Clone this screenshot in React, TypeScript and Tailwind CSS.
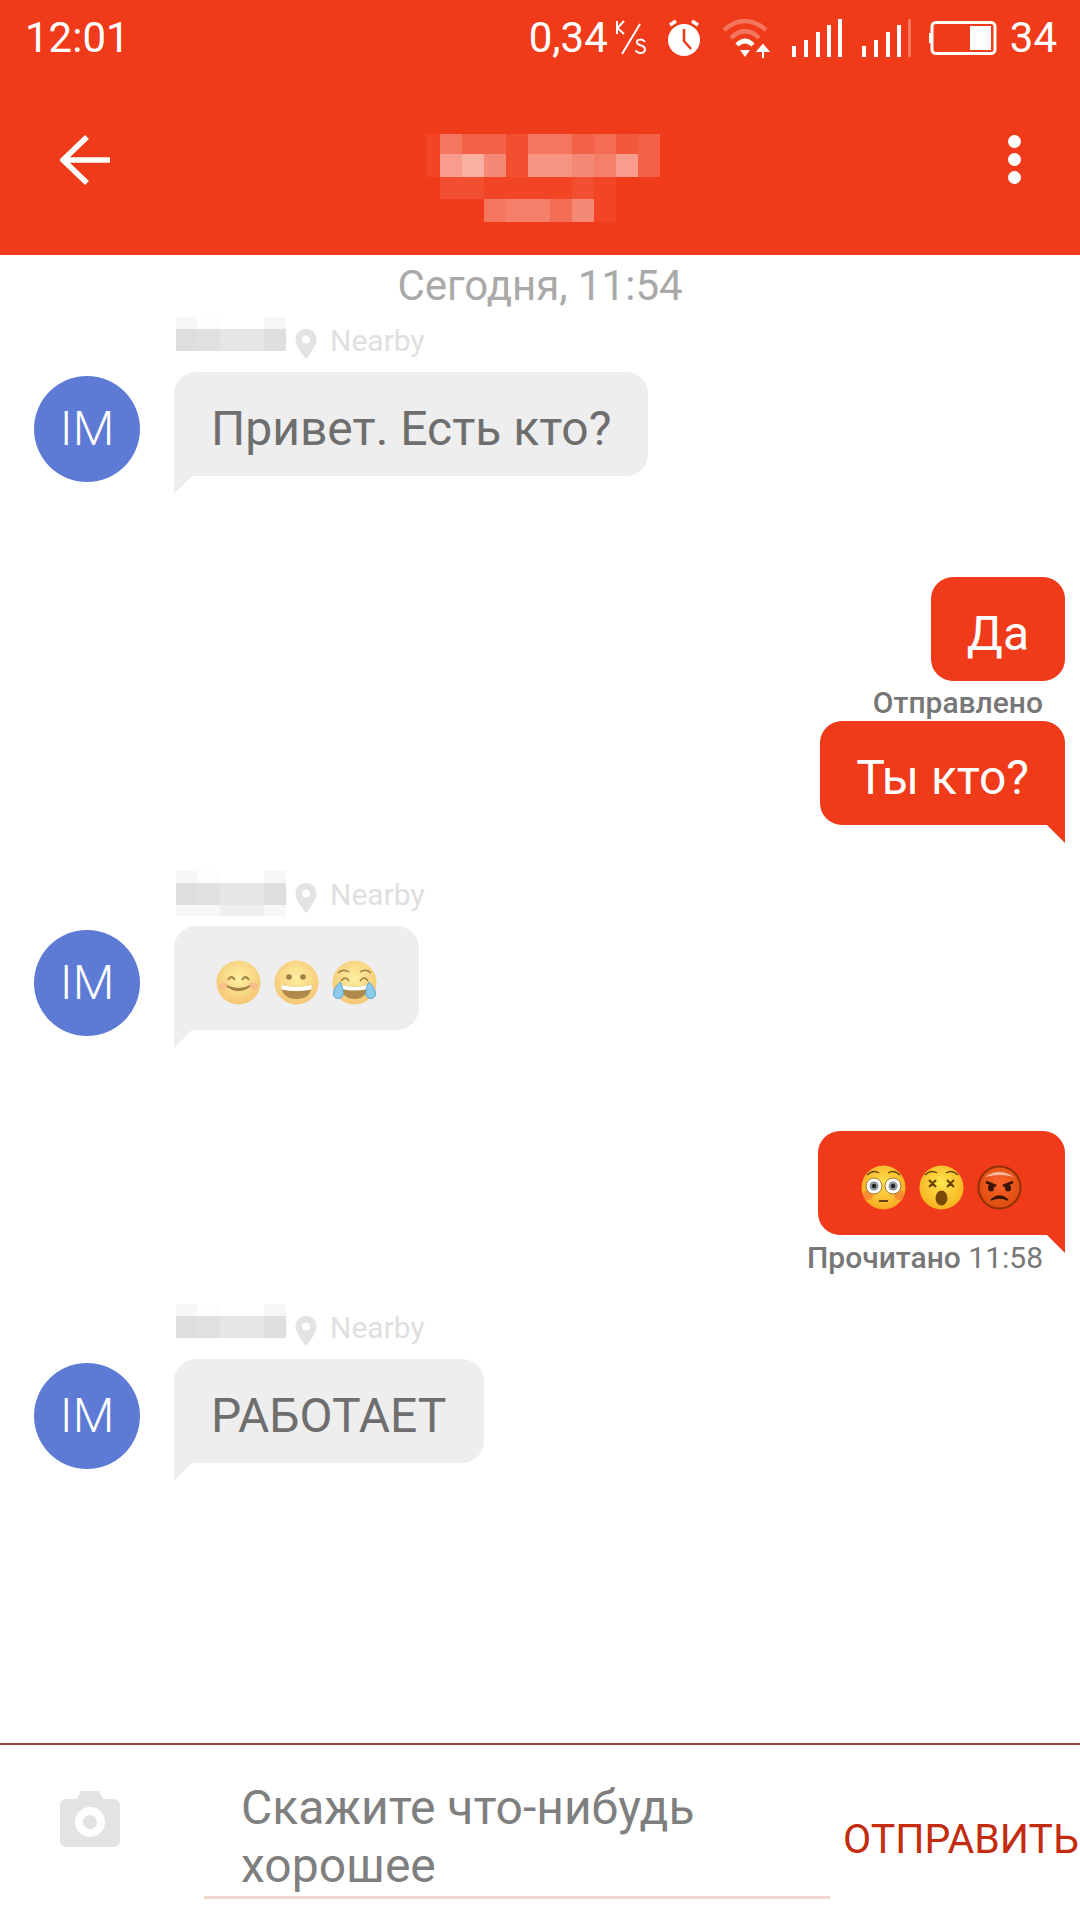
const pixelRows = [
    ['bg-white/5', 'bg-white/30', 'bg-white/20', 'bg-white/20', 'bg-white/10', 'bg-white/30', 'bg-white/30', 'bg-white/20', 'bg-white/25', 'bg-white/15', 'bg-white/20'],
    ['bg-white/5', 'bg-white/50', 'bg-white/60', 'bg-white/40', 'bg-white/10', 'bg-white/45', 'bg-white/45', 'bg-white/40', 'bg-white/35', 'bg-white/50', 'bg-white/20'],
    ['', 'bg-white/10', 'bg-white/10', 'bg-white/5', 'bg-white/5', 'bg-white/5', 'bg-white/5', 'bg-white/10', 'bg-white/5', '', ''],
    ['', '', '', 'bg-white/30', 'bg-white/35', 'bg-white/35', 'bg-white/25', 'bg-white/40', 'bg-white/5', '', ''],
];

const nameRows = [
    ['bg-[#f7f7f7]', 'bg-[#fdfdfd]', 'bg-white', 'bg-[#f6f6f6]'],
    ['bg-[#dedede]', 'bg-[#e0e0e0]', 'bg-[#e6e6e6]', 'bg-[#dfdfdf]'],
];
const nameLastRow = ['bg-[#f7f7f7]', 'bg-[#f8f8f8]', 'bg-[#efefef]', 'bg-[#f8f8f8]'];

const font = "font-['Roboto',sans-serif]";

const Avatar: React.FunctionComponent = () => (
    <div className="w-[106px] h-[106px] rounded-full bg-[#5d7bd5] flex items-center justify-center text-white text-[48px] font-light shrink-0 mt-[59px]">IM</div>
);

const NameLabel: React.FunctionComponent<{tall?: boolean}> = ({tall}) => (
    <div className="h-[55px] flex items-start pl-[2px]">
        <div className="grid grid-cols-[21px_23px_44px_22px] grid-rows-[12px_22px_11px] w-[110px]">
            {(tall ? [...nameRows, nameLastRow] : nameRows).flat().map((cell, index) => (
                <div key={index} className={cell}></div>
            ))}
        </div>
        <svg width="22" height="30" viewBox="0 0 22 30" className="ml-[9px] mt-[12px]">
            <path fillRule="evenodd" fill="#e3e3e3" d="M11 0C5 0 .5 4.600.5 10.500.5 17 7 25 11 30c4-5 10.500-13 10.500-19.500C21.500 4.600 17 0 11 0zm0 14.500a4 4 0 1 1 0-8 4 4 0 0 1 0 8z" />
        </svg>
        <span className="ml-[13px] text-[30px] leading-[40px] text-[#dfdfdf] mt-[4px]">Nearby</span>
    </div>
);

const TailLeft: React.FunctionComponent = () => (
    <svg width="18" height="18" viewBox="0 0 18 18" className="absolute left-0 top-full">
        <path d="M0 0H18L0 18Z" fill="#eeeeee" />
    </svg>
);

const TailRight: React.FunctionComponent = () => (
    <svg width="18" height="18" viewBox="0 0 18 18" className="absolute right-0 top-full">
        <path d="M0 0H18V18Z" fill="#f03b1a" />
    </svg>
);

const Incoming: React.FunctionComponent<{className?: string, tall?: boolean, children: React.ReactNode}> = ({className, tall, children}) => (
    <div className={`flex pl-[34px] ${className ?? ''}`}>
        <Avatar />
        <div className="ml-[34px]">
            <NameLabel tall={tall} />
            <div className="relative h-[104px] px-[37px] pt-[9px] flex items-center w-fit bg-[#eeeeee] rounded-[22px] rounded-bl-none text-[48px] text-[#6e6e6e]">
                {children}
                <TailLeft />
            </div>
        </div>
    </div>
);

const Outgoing: React.FunctionComponent<{tail?: boolean, children: React.ReactNode}> = ({tail, children}) => (
    <div className={`relative self-end h-[104px] px-[36px] pt-[9px] flex items-center bg-[#f03b1a] text-white text-[48px] rounded-[22px] ${tail ? 'rounded-br-none' : ''}`}>
        {children}
        {tail && <TailRight />}
    </div>
);

const Face: React.FunctionComponent<{id: string, from: string, to: string, children: React.ReactNode}> = ({id, from, to, children}) => (
    <svg width="45" height="45" viewBox="0 0 45 45" className="shrink-0">
        <defs>
            <radialGradient id={id} cx="50%" cy="40%" r="60%">
                <stop offset="0%" stopColor={from} />
                <stop offset="100%" stopColor={to} />
            </radialGradient>
        </defs>
        <circle cx="22.500" cy="22.500" r="22" fill={`url(#${id})`} />
        {children}
    </svg>
);

const Smile = () => (
    <Face id="smile" from="#fdf0a0" to="#f5c673">
        <ellipse cx="8" cy="26" rx="5" ry="3.500" fill="#f9b48a" opacity="0.7" />
        <ellipse cx="37" cy="26" rx="5" ry="3.500" fill="#f9b48a" opacity="0.7" />
        <path d="M12 20q3.500-6 7 0M26 20q3.500-6 7 0" fill="none" stroke="#a07f45" strokeWidth="1.800" />
        <path d="M11 26q11.500 9 23 0q-11.500 5-23 0z" fill="#a07f45" stroke="#a07f45" strokeWidth="1.200" />
    </Face>
);

const Grin = () => (
    <Face id="grin" from="#fdf0a0" to="#f5c673">
        <circle cx="15" cy="17" r="2.800" fill="#a07f45" />
        <circle cx="29" cy="17" r="2.800" fill="#a07f45" />
        <path d="M7 25q15.500 3.500 31 0q-1 14-15.500 14T7 25z" fill="#b08a4c" />
        <path d="M7 25q15.500 3.500 31 0l-.7 4.500q-15 3-29.600 0z" fill="#ffffff" />
    </Face>
);

const Joy = () => (
    <Face id="joy" from="#fdf0a0" to="#f5c673">
        <path d="M6 13q5-5 11-1M28 12q6-4 11 1M9 21q4.500-6 8 0M28 21q4.500-6 8 0" fill="none" stroke="#a07f45" strokeWidth="1.500" />
        <path d="M9 25q13.500 3.500 27 0q-1 14-13.500 14T9 25z" fill="#b08a4c" />
        <path d="M9 25q13.500 3.500 27 0l-.7 4q-13 3-25.600 0z" fill="#ffffff" />
        <path d="M8 22c-3 4-8 8-6 14 2 4 8 3 9-1 1-4-1-9-3-13z" fill="#8ccbec" stroke="#5aa3cf" strokeWidth="1" />
        <path d="M37 22c3 4 8 8 6 14-2 4-8 3-9-1-1-4 1-9 3-13z" fill="#8ccbec" stroke="#5aa3cf" strokeWidth="1" />
    </Face>
);

const Flushed = () => (
    <Face id="flushed" from="#ffe14d" to="#f8a921">
        <ellipse cx="7" cy="30" rx="5" ry="5" fill="#f5733a" opacity="0.6" />
        <ellipse cx="38" cy="30" rx="5" ry="5" fill="#f5733a" opacity="0.6" />
        <path d="M6 10q6-6 12-2M27 8q6-4 12 2" fill="none" stroke="#6b4300" strokeWidth="1.500" />
        <circle cx="13" cy="21" r="8" fill="#ffffff" stroke="#a87a20" strokeWidth="1" />
        <circle cx="32" cy="21" r="8" fill="#ffffff" stroke="#a87a20" strokeWidth="1" />
        <circle cx="13" cy="21" r="4.500" fill="#8a9698" />
        <circle cx="32" cy="21" r="4.500" fill="#8a9698" />
        <circle cx="13" cy="21" r="2.200" fill="#222222" />
        <circle cx="32" cy="21" r="2.200" fill="#222222" />
        <path d="M18 36h9" stroke="#6b4300" strokeWidth="2" />
    </Face>
);

const Dizzy = () => (
    <Face id="dizzy" from="#ffe54f" to="#f6b21e">
        <path d="M6 10q6-6 12-2M27 8q6-4 12 2" fill="none" stroke="#6b4300" strokeWidth="1.500" />
        <path d="M10 15l7 7M17 15l-7 7M28 15l7 7M35 15l-7 7" stroke="#6b4300" strokeWidth="2.200" />
        <ellipse cx="22.500" cy="33" rx="6" ry="7.500" fill="#7a4a06" />
    </Face>
);

const Angry = () => (
    <Face id="angry" from="#f9642a" to="#dc4a0c">
        <circle cx="22.500" cy="22.500" r="21" fill="none" stroke="#8f2f04" strokeWidth="2" />
        <path d="M8 12q14-10 29 0q-14-4-29 0z" fill="#fbb9a0" />
        <path d="M9 17l10 4M36 17l-10 4" stroke="#3a1402" strokeWidth="2.800" />
        <ellipse cx="14" cy="23" rx="3" ry="3.500" fill="#3a1402" />
        <ellipse cx="31" cy="23" rx="3" ry="3.500" fill="#3a1402" />
        <path d="M14 35q8.500-8 17 0q-8.500-4-17 0z" fill="#3a1402" stroke="#3a1402" strokeWidth="1.500" />
    </Face>
);

const StatusIcons: React.FunctionComponent = () => (
    <div className="flex items-center">
        <span className="text-[42px] leading-none">0,34</span>
        <svg width="33" height="40" viewBox="0 0 33 40" className="ml-[6px]">
            <path d="M3 3v13M10 3L3.500 10L10 16M26 6L8 36" fill="none" stroke="white" strokeWidth="2" />
            <path d="M31 24q-2-3-5-2.500q-3.500 .5-3 3q.5 2 4 3q4 1 4 4q0 3-4 3.500q-3.500 .5-5.500-2.500" fill="none" stroke="white" strokeWidth="2" />
        </svg>
        <svg width="36" height="38" viewBox="0 0 36 38" className="ml-[19px]">
            <circle cx="18" cy="21" r="16" fill="white" />
            <path d="M4 6l6-4M32 6l-6-4" stroke="white" strokeWidth="3.500" />
            <path d="M18 10v12l7 8" fill="none" stroke="#f03b1a" strokeWidth="2.500" />
        </svg>
        <svg width="48" height="40" viewBox="0 0 48 40" className="ml-[21px]">
            <path d="M1 12Q22-6 43 12" fill="none" stroke="white" strokeOpacity="0.3" strokeWidth="4.500" />
            <path d="M8 20Q22 6 36 20" fill="none" stroke="white" strokeOpacity="0.3" strokeWidth="4.500" />
            <path d="M14 27Q22 19 30 27" fill="none" stroke="white" strokeWidth="4.500" />
            <path d="M17 32h10l-5 7z" fill="white" />
            <path d="M40 40V30M35 33l5-6 5 6z" fill="white" stroke="white" strokeWidth="2" />
        </svg>
        <svg width="50" height="38" viewBox="0 0 50 38" className="ml-[21px]" fill="white">
            <rect x="0" y="27" width="4" height="11" />
            <rect x="12" y="21" width="4" height="17" />
            <rect x="24" y="13" width="4" height="25" />
            <rect x="46" y="0" width="4" height="38" />
            <rect x="35" y="6" width="4" height="32" />
        </svg>
        <svg width="50" height="38" viewBox="0 0 50 38" className="ml-[20px]" fill="white">
            <rect x="0" y="27" width="4" height="11" />
            <rect x="12" y="21" width="4" height="17" />
            <rect x="24" y="13" width="4" height="25" />
            <rect x="35" y="6" width="4" height="32" />
            <rect x="46" y="0" width="3" height="38" fillOpacity="0.3" />
        </svg>
        <svg width="68" height="34" viewBox="0 0 68 34" className="ml-[17px]">
            <rect x="3" y="1.500" width="63" height="31" rx="4" fill="none" stroke="white" strokeWidth="3" />
            <rect x="0" y="12" width="2" height="10" fill="white" />
            <rect x="41" y="5" width="21" height="24" fill="white" />
        </svg>
        <span className="text-[42px] leading-none ml-[13px]">34</span>
    </div>
);

const App: React.FunctionComponent = () => {
    return (
        <div className={`w-[1080px] h-[1920px] bg-white flex flex-col overflow-hidden ${font}`}>
            <header className="h-[255px] bg-[#f03b1a] text-white shrink-0">
                <div className="h-[76px] pl-[25px] pr-[23px] flex items-center justify-between">
                    <span className="text-[42px] leading-none">12:01</span>
                    <StatusIcons />
                </div>
                <div className="h-[172px] pl-[60px] pr-[59px] flex items-start justify-between">
                    <svg width="50" height="50" viewBox="0 0 50 50" className="mt-[59px]">
                        <path d="M50 25H4M27 2L3 25l24 23" fill="none" stroke="white" strokeWidth="5.500" />
                    </svg>
                    <div className="mt-[58px] ml-[-32px] grid grid-cols-[14px_repeat(10,22px)] grid-rows-[20px_23px_22px_23px]">
                        {pixelRows.flat().map((cell, index) => (
                            <div key={index} className={cell}></div>
                        ))}
                    </div>
                    <div className="mt-[59px] flex flex-col gap-[5px]">
                        <div className="w-[13px] h-[13px] rounded-full bg-white"></div>
                        <div className="w-[13px] h-[13px] rounded-full bg-white"></div>
                        <div className="w-[13px] h-[13px] rounded-full bg-white"></div>
                    </div>
                </div>
            </header>

            <main className="flex-1 flex flex-col">
                <div className="h-[56px] flex items-center justify-center text-[42px] text-[#a9a9a9] mt-[2px] mb-[4px]">Сегодня, 11:54</div>
                <Incoming>Привет. Есть кто?</Incoming>

                <div className="flex flex-col pr-[15px] mt-[95px]">
                    <Outgoing>Да</Outgoing>
                    <div className="self-end h-[40px] pr-[22px] pt-[2px] flex items-center text-[30px] font-medium text-[#777777]">Отправлено</div>
                    <Outgoing tail>Ты кто?</Outgoing>
                </div>

                <Incoming tall className="mt-[46px]">
                    <div className="flex gap-[13px] px-[5px]">
                        <Smile />
                        <Grin />
                        <Joy />
                    </div>
                </Incoming>

                <div className="flex flex-col pr-[15px] mt-[95px]">
                    <Outgoing tail>
                        <div className="flex gap-[13px] px-[7px]">
                            <Flushed />
                            <Dizzy />
                            <Angry />
                        </div>
                    </Outgoing>
                    <div className="self-end h-[43px] pr-[22px] flex items-end text-[30px] leading-[40px] text-[#777777]">
                        <span className="font-medium">Прочитано</span>&nbsp;11:58
                    </div>
                </div>

                <Incoming className="mt-[26px]">РАБОТАЕТ</Incoming>
            </main>

            <footer className="h-[177px] shrink-0 border-t-2 border-[#9b4a3a] flex">
                <div className="w-[204px] pl-[60px] pt-[46px]">
                    <svg width="60" height="56" viewBox="0 0 60 56">
                        <path fillRule="evenodd" fill="#e3e3e3" d="M21 0h18l4 8h11a6 6 0 0 1 6 6v36a6 6 0 0 1-6 6H6a6 6 0 0 1-6-6V14a6 6 0 0 1 6-6h11zM30 16a15 15 0 1 0 0 30 15 15 0 0 0 0-30zm0 8a7 7 0 1 1 0 14 7 7 0 0 1 0-14z" />
                    </svg>
                </div>
                <div className="w-[626px] h-[154px] border-b-[3px] border-[#f3d6ce] pl-[37px] pt-[34px] text-[48px] leading-[58px] text-[#7f7f7f]">
                    Скажите что-нибудь<br />хорошее
                </div>
                <div className="flex-1 pl-[13px] pt-[70px] text-[41px] leading-[48px] text-[#c42c10] whitespace-nowrap">ОТПРАВИТЬ</div>
            </footer>
        </div>
    );
}

export default App;
